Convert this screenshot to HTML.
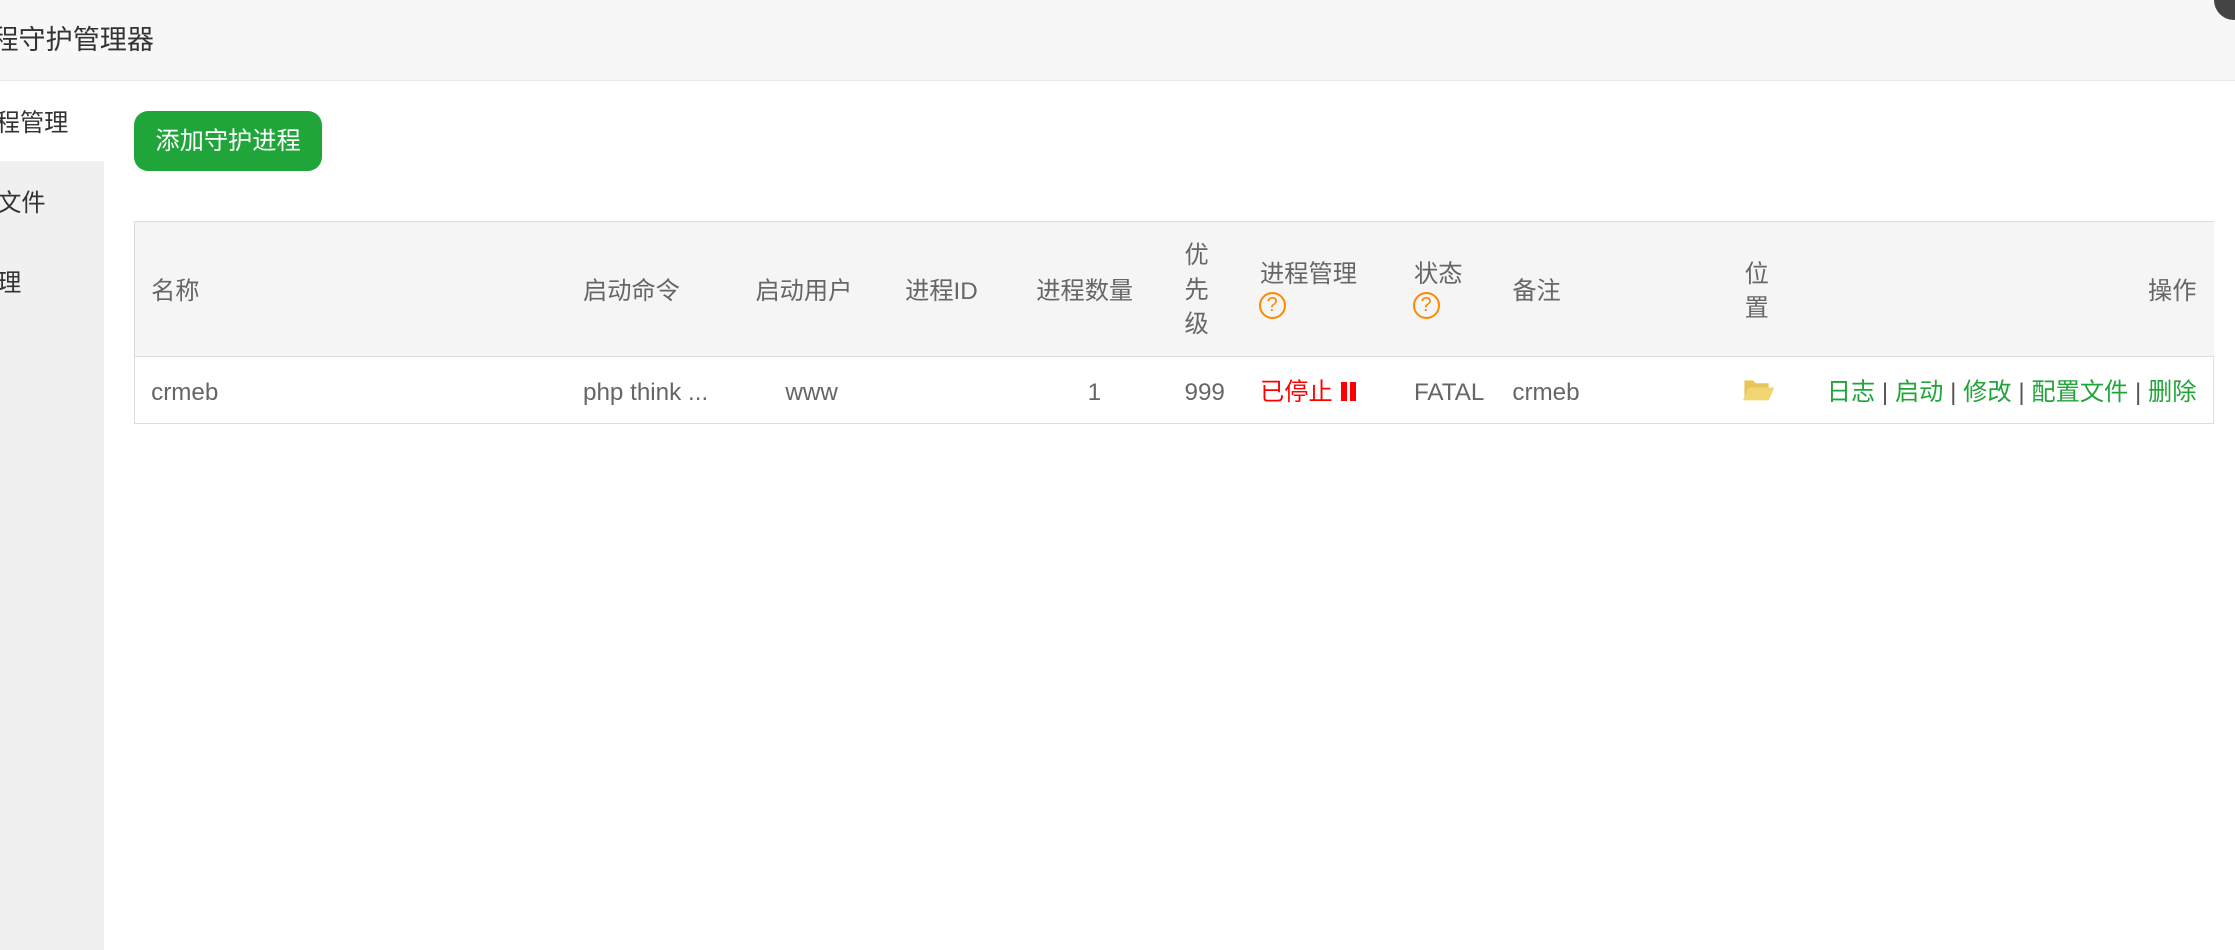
<!DOCTYPE html>
<html><head><meta charset="utf-8"><style>
html,body{margin:0;padding:0;width:2235px;height:950px;overflow:hidden;background:#fff}
#w{zoom:1.42538;width:1568px;height:667px;position:relative;font-family:"Liberation Sans","Noto Sans CJK SC",sans-serif;color:#666;font-size:17px}
.a{position:absolute;white-space:nowrap;line-height:24px}
.hd{left:0;top:0;width:1568px;height:56px;background:#f7f7f7;border-bottom:1px solid #e8e8e8}
.g{color:#20a53a}.s{color:#555}
.q{width:19px;height:19px;border:1.5px solid #f80;border-radius:50%;box-sizing:border-box;color:#f80;font-size:14px;line-height:16px;text-align:center}
</style></head><body><div id="w">
<div class="a hd"></div>
<div class="a" style="left:-6px;top:16px;font-size:19px;color:#333">程守护管理器</div>
<div class="a" style="left:1553px;top:-14px;width:28px;height:28px;border-radius:50%;background:#444"></div>
<div class="a" style="left:0;top:113px;width:73px;height:554px;background:#f0f0f0"></div>
<div class="a" style="left:-3px;top:75px;color:#333">程管理</div>
<div class="a" style="left:-2px;top:131px;color:#333">文件</div>
<div class="a" style="left:-2px;top:187px;color:#333">理</div>
<div class="a" style="left:94px;top:78px;width:132px;height:42px;border-radius:10px;background:#20a53a;color:#fff;line-height:44px;text-align:center">添加守护进程</div>
<div class="a" style="left:94px;top:155px;width:1458px;height:141px;border:1px solid #ddd"></div>
<div class="a" style="left:95px;top:156px;width:1458px;height:94px;background:#f5f5f5;border-bottom:1px solid #ddd"></div>
<div class="a" style="left:106px;top:193px">名称</div>
<div class="a" style="left:409px;top:193px">启动命令</div>
<div class="a" style="left:530px;top:193px">启动用户</div>
<div class="a" style="left:635px;top:193px">进程ID</div>
<div class="a" style="left:727px;top:193px">进程数量</div>
<div class="a" style="left:831px;top:168px;width:17px;white-space:normal">优先级</div>
<div class="a" style="left:884px;top:181px">进程管理</div>
<div class="a" style="left:992px;top:181px">状态</div>
<div class="a q" style="left:883px;top:205px">?</div>
<div class="a q" style="left:991px;top:205px">?</div>
<div class="a" style="left:1061px;top:193px">备注</div>
<div class="a" style="left:1224px;top:181px;width:17px;white-space:normal">位置</div>
<div class="a" style="left:1507px;top:193px">操作</div>
<div class="a" style="left:106px;top:264px">crmeb</div>
<div class="a" style="left:409px;top:264px">php think ...</div>
<div class="a" style="left:551px;top:264px">www</div>
<div class="a" style="left:763px;top:264px">1</div>
<div class="a" style="left:831px;top:264px">999</div>
<div class="a" style="left:884px;top:264px;color:#f00">已停止</div>
<div class="a" style="left:941px;top:268px;width:4px;height:13px;background:#f00"></div>
<div class="a" style="left:947px;top:268px;width:4px;height:13px;background:#f00"></div>
<div class="a" style="left:992px;top:264px">FATAL</div>
<div class="a" style="left:1061px;top:264px">crmeb</div>
<svg class="a" style="left:1223px;top:266px" width="22" height="16" viewBox="0 0 22 16"><path d="M1 1h6l2 2h9v3H5L1 14z" fill="#e6c65a"/><path d="M4 6h18l-4 9H0z" fill="#f0d570"/></svg>
<div class="a" style="right:27px;top:264px"><span class="g">日志</span> <span class="s">|</span> <span class="g">启动</span> <span class="s">|</span> <span class="g">修改</span> <span class="s">|</span> <span class="g">配置文件</span> <span class="s">|</span> <span class="g">删除</span></div>
</div></body></html>
